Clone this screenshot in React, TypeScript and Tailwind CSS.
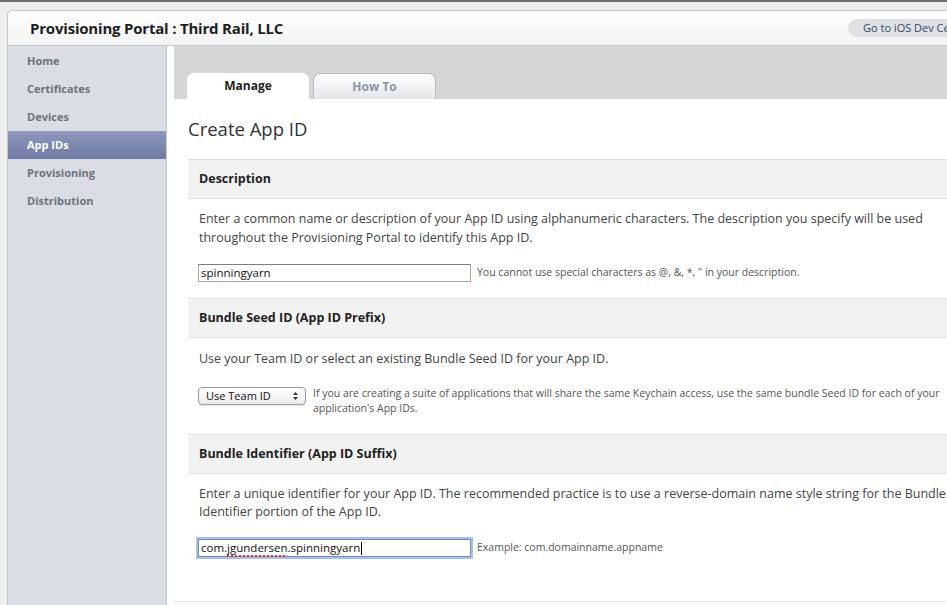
const font = "font-['Open_Sans','Liberation_Sans',sans-serif]";

const navItems = ["Home", "Certificates", "Devices", "App IDs", "Provisioning", "Distribution"];

function SectionHeader({ title }: { title: string }) {
  return (
    <div className="h-[40px] flex items-center bg-[#f2f2f2] border-y border-[#e1e1e1] pl-[11px]">
      <span className="text-[12.5px] font-bold text-[#222]">{title}</span>
    </div>
  );
}

function SelectArrows() {
  return (
    <svg width="7" height="10" viewBox="0 0 7 10" className="text-[#333]">
      <path d="M3.5 1 L6 4 H1 Z" fill="currentColor" />
      <path d="M3.5 9 L6 6 H1 Z" fill="currentColor" />
    </svg>
  );
}

export default function App() {
  return (
    <div className={`w-[947px] h-[605px] overflow-hidden bg-[#ededed] border-t-2 border-[#6e6e6e] ${font}`}>
      <div className="ml-[7px] mt-[8px] w-[1010px] h-[620px] rounded-tl-[5px] border border-[#c8c8c8] bg-white flex flex-col">
        {/* header */}
        <div className="h-[35px] shrink-0 flex items-center justify-between border-b border-[#c9c9c9] bg-gradient-to-b from-white to-[#f3f3f3] rounded-tl-[5px]">
          <span className="pl-[22px] text-[15px] font-bold text-[#1e1e1e] tracking-[-0.2px]">
            Provisioning Portal : Third Rail, LLC
          </span>
          <div className="mr-[-72px] h-[18px] w-[240px] rounded-full bg-[#dfe1e5] flex items-center pl-[15px] text-[11px] text-[#34466b] whitespace-nowrap">
            Go to iOS Dev Center
          </div>
        </div>

        <div className="flex flex-1">
          {/* sidebar */}
          <div className="w-[159px] shrink-0 bg-[#dadde4] border-r border-[#c6c9d0] pt-[1px]">
            {navItems.map((item) => (
              <div
                key={item}
                className={
                  item === "App IDs"
                    ? "h-[28px] flex items-center pl-[19px] text-[11px] font-bold text-white bg-gradient-to-b from-[#8e98bc] to-[#6f7ba5]"
                    : "h-[28px] flex items-center pl-[19px] text-[11px] font-bold text-[#6d727c]"
                }
              >
                {item}
              </div>
            ))}
          </div>

          {/* main */}
          <div className="flex-1 px-[7px] bg-white">
            <div className="h-[53px] bg-[#d4d6d8] flex items-end pl-[13px] gap-[4px]">
              <div className="w-[122px] h-[26px] rounded-t-[7px] bg-white flex items-center justify-center text-[12px] font-bold text-[#222]">
                Manage
              </div>
              <div className="w-[123px] h-[26px] rounded-t-[7px] border border-b-0 border-[#b9bcc2] bg-gradient-to-b from-white to-[#e4e6ea] flex items-center justify-center text-[12px] font-bold text-[#8b95a8]">
                How To
              </div>
            </div>

            <div className="pl-[14px] border-b border-[#e6e6e6] pb-[44px]">
              <div className="h-[60px] flex items-center text-[18.5px] text-[#333]">Create App ID</div>

              <SectionHeader title="Description" />
              <p className="mt-[10px] pl-[11px] text-[12.5px] leading-[19px] text-[#444] w-[770px]">
                Enter a common name or description of your App ID using alphanumeric characters. The description you specify will be used throughout the Provisioning Portal to identify this App ID.
              </p>
              <div className="mt-[17px] pl-[10px] flex items-center">
                <div className="w-[273px] h-[18px] border border-[#a5a5a5] border-t-[#7d7d7d] bg-white flex items-center pl-[2px] text-[11.5px] text-[#111]">
                  spinningyarn
                </div>
                <span className="ml-[6px] text-[10.5px] text-[#555]">
                  You cannot use special characters as @, &amp;, *, " in your description.
                </span>
              </div>

              <div className="mt-[16px]">
                <SectionHeader title="Bundle Seed ID (App ID Prefix)" />
              </div>
              <p className="mt-[11px] pl-[11px] text-[12.5px] leading-[19px] text-[#444]">
                Use your Team ID or select an existing Bundle Seed ID for your App ID.
              </p>
              <div className="mt-[18px] pl-[10px] flex items-start">
                <div className="w-[108px] h-[18px] mt-[1px] rounded-[4px] border border-[#9a9a9a] bg-gradient-to-b from-white to-[#ececec] flex items-center justify-between pl-[7px] pr-[6px] text-[11px] text-[#111] shadow-[0_1px_1px_rgba(0,0,0,0.1)]">
                  <span>Use Team ID</span>
                  <SelectArrows />
                </div>
                <p className="ml-[7px] w-[660px] text-[10.5px] leading-[15px] text-[#555]">
                  If you are creating a suite of applications that will share the same Keychain access, use the same bundle Seed ID for each of your application's App IDs.
                </p>
              </div>

              <div className="mt-[18px]">
                <SectionHeader title="Bundle Identifier (App ID Suffix)" />
              </div>
              <p className="mt-[11px] pl-[11px] text-[12.5px] leading-[18px] text-[#444] w-[780px]">
                Enter a unique identifier for your App ID. The recommended practice is to use a reverse-domain name style string for the Bundle Identifier portion of the App ID.
              </p>
              <div className="mt-[18px] pl-[10px] flex items-center">
                <div className="w-[273px] h-[18px] border border-[#6d8fc8] bg-white flex items-center pl-[2px] text-[11.5px] text-[#111] shadow-[0_0_0_2px_#a9c1e8]">
                  <span>com.</span>
                  <span className="underline decoration-dotted decoration-[#e0342c] decoration-2 underline-offset-[3px]">jgundersen</span>
                  <span>.spinningyarn</span>
                  <span className="ml-[1px] w-[1px] h-[13px] bg-black" />
                </div>
                <span className="ml-[6px] text-[10.5px] text-[#555]">Example: com.domainname.appname</span>
              </div>
            </div>
          </div>
        </div>
      </div>
    </div>
  );
}
